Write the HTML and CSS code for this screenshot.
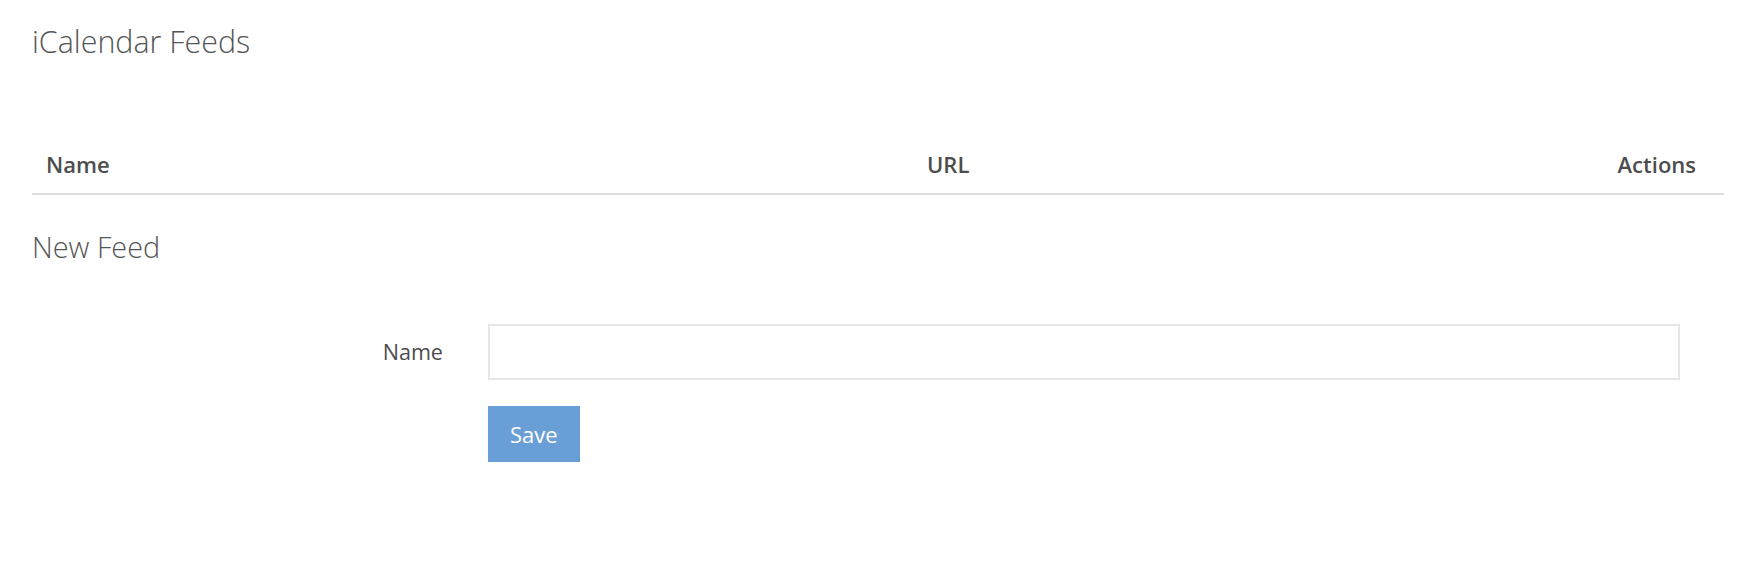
FILE: index.html
```html
<!DOCTYPE html>
<html lang="en">
<head>
    <meta charset="UTF-8">
    <title>iCalendar Feeds</title>
    <link rel="stylesheet" href="styles.css">
</head>
<body>
    <div class="container">
        <h1 class="page-title">iCalendar Feeds</h1>
        <table class="feed-table">
            <thead>
                <tr>
                    <th class="col-name">Name</th>
                    <th class="col-url">URL</th>
                    <th class="col-actions">Actions</th>
                </tr>
            </thead>
            <tbody></tbody>
        </table>

        <h2 class="section-title">New Feed</h2>
        <form class="feed-form" onsubmit="return false">
            <div class="form-row">
                <label for="feedName" class="form-label">Name</label>
                <input type="text" id="feedName" class="form-input">
            </div>
            <div class="form-row">
                <span></span>
                <div><button type="submit" class="button">Save</button></div>
            </div>
        </form>
    </div>
</body>
</html>
```

FILE: styles.css
```css
body {
    font-family: 'Open Sans', sans-serif;
    background-color: #fff;
    margin: 0;
    padding: 0;
    color: #4d4d4d;
}
.container {
    padding: 21px 30px 0 32px;
}
.page-title {
    margin: 0;
    font-size: 30.4px;
    font-weight: 300;
    line-height: 42px;
    color: #555;
}
.feed-table {
    width: 100%;
    margin-top: 86px;
    border-collapse: collapse;
}
.feed-table th {
    font-size: 22px;
    font-weight: 600;
    line-height: 30px;
    padding: 0 14px 14px;
    text-align: left;
    border-bottom: 2px solid #dcdcdc;
}
.feed-table .col-name {
    width: 853px;
}
.feed-table .col-actions {
    text-align: right;
    padding-right: 28px;
}
.section-title {
    margin: 33px 0 0;
    font-size: 28.8px;
    font-weight: 300;
    line-height: 38px;
    color: #555;
}
.feed-form {
    margin-top: 58px;
    padding-right: 44px;
}
.form-row {
    display: grid;
    grid-template-columns: 456px 1fr;
    align-items: center;
    margin-bottom: 26px;
}
.form-label {
    text-align: right;
    padding-right: 45px;
    font-size: 21.6px;
    line-height: 30px;
}
.form-input {
    box-sizing: border-box;
    height: 56px;
    width: 100%;
    border: 2px solid #e6e6e6;
    padding: 0 12px;
    font-size: 22px;
    font-family: inherit;
}
.button {
    height: 56px;
    padding: 0 22px;
    background-color: #6a9ed6;
    color: #fff;
    border: none;
    font-size: 22px;
    font-family: inherit;
    cursor: pointer;
}
```
